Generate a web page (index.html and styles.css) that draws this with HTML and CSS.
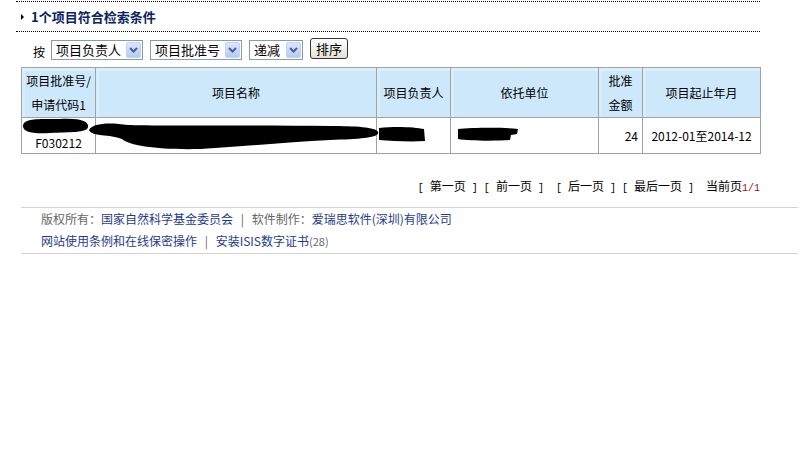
FILE: index.html
```html
<!DOCTYPE html>
<html lang="zh-CN">
<head>
    <meta charset="UTF-8">
    <title>项目检索结果</title>
    <link rel="stylesheet" href="styles.css">
</head>
<body>
<div class="page">
    <!-- result title -->
    <div class="title-bar">
        <span class="arrow"></span>
        <span class="title">1个项目符合检索条件</span>
    </div>

    <!-- sort controls -->
    <div class="sort-row">
        <span class="sort-label">按</span>
        <span class="select sel-wide">
            <span class="select-text">项目负责人</span>
            <span class="select-btn"><svg width="9" height="6" viewBox="0 0 9 6"><polyline points="1,1 4.5,4.5 8,1" fill="none" stroke="#4a5f8a" stroke-width="2"/></svg></span>
        </span>
        <span class="select sel-wide">
            <span class="select-text">项目批准号</span>
            <span class="select-btn"><svg width="9" height="6" viewBox="0 0 9 6"><polyline points="1,1 4.5,4.5 8,1" fill="none" stroke="#4a5f8a" stroke-width="2"/></svg></span>
        </span>
        <span class="select sel-narrow">
            <span class="select-text">递减</span>
            <span class="select-btn"><svg width="9" height="6" viewBox="0 0 9 6"><polyline points="1,1 4.5,4.5 8,1" fill="none" stroke="#4a5f8a" stroke-width="2"/></svg></span>
        </span>
        <button class="sort-button">排序</button>
    </div>

    <!-- result table -->
    <div class="table-wrap">
        <table class="result-table">
            <colgroup>
                <col class="c-code">
                <col class="c-name">
                <col class="c-person">
                <col class="c-unit">
                <col class="c-money">
                <col class="c-date">
            </colgroup>
            <tr>
                <th>项目批准号/<br>申请代码1</th>
                <th>项目名称</th>
                <th>项目负责人</th>
                <th>依托单位</th>
                <th>批准<br>金额</th>
                <th>项目起止年月</th>
            </tr>
            <tr>
                <td class="code-cell">F030212</td>
                <td></td>
                <td></td>
                <td></td>
                <td class="num">24</td>
                <td class="center">2012-01至2014-12</td>
            </tr>
        </table>
        <!-- redaction marks over the data row -->
        <svg class="redact" width="739" height="35" viewBox="21 118 739 35">
            <path d="M23 126 C23 118 40 119 60 119 C80 118 89 121 88 127 C87 133 70 132 50 133 C32 134 23 132 23 126 Z" fill="#000"/>
            <path d="M89 130 C92 123 110 122 128 125 C160 126 250 125 330 126 C355 126 376 127 378 132 C380 138 360 139 330 140 C290 142 250 146 200 149 C160 150 130 146 122 139 C110 134 92 137 89 130 Z" fill="#000"/>
            <path d="M379 128 C395 126 415 127 424 129 L425 141 C410 142 392 141 379 140 Z" fill="#000"/>
            <path d="M458 129 C470 128 500 127 518 129 L517 134 L511 135 L510 140 C495 141 470 141 458 139 Z" fill="#000"/>
        </svg>
    </div>

    <!-- paging -->
    <div class="pager">[ <span class="cjk">第一页</span> ] [ <span class="cjk">前一页</span> ]  [ <span class="cjk">后一页</span> ] [ <span class="cjk">最后一页</span> ]  <span class="cjk">当前页</span><span class="page-num">1/1</span></div>
</div>

<!-- footer -->
<div class="footer">
    <p class="first">
        <span class="muted">版权所有：</span><a href="#">国家自然科学基金委员会</a>
        <span class="muted sep">|</span>
        <span class="muted">软件制作：</span><a href="#">爱瑞思软件(深圳)有限公司</a>
    </p>
    <p>
        <a href="#">网站使用条例和在线保密操作</a>
        <span class="muted sep">|</span>
        <a href="#">安装ISIS数字证书</a><span class="muted small">(28)</span>
    </p>
</div>
</body>
</html>
```

FILE: styles.css
```css
body {
    margin: 0;
    font-family: "Noto Sans CJK SC", "DejaVu Sans", sans-serif;
    font-size: 12px;
    color: #000;
    background: #fff;
}

.page {
    width: 744px;
    margin-left: 16px;
}

.title-bar {
    margin-top: 1px;
    height: 29px;
    border-top: 1px dotted #000;
    border-bottom: 1px dotted #000;
    display: flex;
    align-items: center;
    padding-left: 5px;
}

.arrow {
    width: 0;
    height: 0;
    border-left: 3px solid #000;
    border-top: 3px solid transparent;
    border-bottom: 3px solid transparent;
    margin-right: 7px;
}

.title {
    font-size: 13px;
    font-weight: bold;
    color: #0a2462;
    line-height: 16px;
}

.sort-row {
    height: 35px;
    display: flex;
    align-items: center;
    padding-left: 17px;
}

.sort-label {
    margin-right: 6px;
    margin-top: 3px;
}

.select {
    height: 20px;
    box-sizing: border-box;
    border: 1px solid #7f9db9;
    display: flex;
    align-items: center;
    justify-content: space-between;
    margin-right: 7px;
    background: #fff;
}

.sel-wide {
    width: 92px;
}

.sel-narrow {
    width: 54px;
}

.select-text {
    padding-left: 4px;
    font-size: 13px;
    line-height: 18px;
}

.select-btn {
    width: 15px;
    height: 16px;
    margin-right: 1px;
    border-radius: 2px;
    background: linear-gradient(#dce6fd, #b7c9f6);
    border: 1px solid #c2d2f8;
    box-sizing: border-box;
    display: flex;
    align-items: center;
    justify-content: center;
}

.sort-button {
    width: 38px;
    height: 21px;
    padding: 0;
    font-family: inherit;
    font-size: 13px;
    line-height: 18px;
    border: 1px solid #333;
    border-radius: 3px;
    background: linear-gradient(#ffffff, #e4e1d5);
    margin-top: -2px;
}

.table-wrap {
    position: relative;
    margin-left: 5px;
    width: 739px;
}

.result-table {
    width: 739px;
    border-collapse: collapse;
    table-layout: fixed;
}

.c-code { width: 74px; }
.c-name { width: 281px; }
.c-person { width: 74px; }
.c-unit { width: 148px; }
.c-money { width: 44px; }
.c-date { width: 118px; }

.result-table th {
    height: 49px;
    padding: 0 2px;
    font-weight: normal;
    line-height: 24px;
    background: #cde8fa;
    box-shadow: inset 0 3px 0 #dcf0fc, inset 3px 0 0 #d6edfb;
    border: 1px solid #a2a2a2;
}

.result-table td {
    height: 33px;
    padding: 0 4px;
    border: 1px solid #a2a2a2;
    line-height: 16px;
}

.result-table .code-cell {
    text-align: center;
    vertical-align: bottom;
    padding-bottom: 2px;
}

.result-table .num {
    text-align: right;
}

.result-table .center {
    text-align: center;
    padding: 0;
}

.redact {
    position: absolute;
    left: 0;
    top: 51px;
}

.pager {
    margin-top: 24px;
    height: 20px;
    line-height: 20px;
    text-align: right;
    white-space: pre;
    font-family: "Liberation Mono", "Noto Sans CJK SC", monospace;
    font-size: 10px;
}

.pager .cjk {
    font-family: "Noto Sans CJK SC", sans-serif;
    font-size: 12px;
    line-height: 16px;
}

.page-num {
    color: #9a1010;
}

.footer {
    margin: 9px 0 0 21px;
    width: 777px;
    padding-left: 20px;
    box-sizing: border-box;
    border-top: 1px solid #d4d4d4;
    border-bottom: 1px solid #d4d4d4;
}

.footer p {
    margin: 0;
    line-height: 24px;
}

.footer p.first {
    line-height: 21px;
}

.footer a {
    color: #1e3c8c;
    text-decoration: none;
}

.muted {
    color: #666;
}

.sep {
    margin: 0 5px;
}

.small {
    font-size: 11px;
}
```
